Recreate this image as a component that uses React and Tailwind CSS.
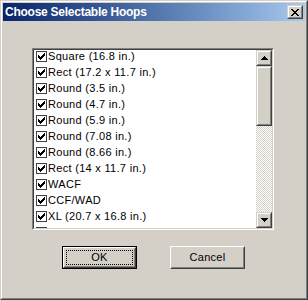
import React from "react";

const items = [
  "Square (16.8 in.)",
  "Rect (17.2 x 11.7 in.)",
  "Round (3.5 in.)",
  "Round (4.7 in.)",
  "Round (5.9 in.)",
  "Round (7.08 in.)",
  "Round (8.66 in.)",
  "Rect (14 x 11.7 in.)",
  "WACF",
  "CCF/WAD",
  "XL (20.7 x 16.8 in.)",
  "Tech 2 Hoop (9.4 x 8.3 in.)",
];

function Check() {
  return (
    <svg width="11" height="11" viewBox="0 0 11 11" className="shrink-0 mt-[1px] ml-[2px]" shapeRendering="crispEdges">
      <rect x="0" y="0" width="11" height="11" fill="#404040" />
      <rect x="1" y="1" width="9" height="9" fill="#ffffff" />
      <path d="M2 4h1v3h-1zM3 5h1v3h-1zM4 6h1v3h-1zM5 5h1v3h-1zM6 4h1v3h-1zM7 3h1v3h-1zM8 2h1v3h-1z" fill="#000" />
    </svg>
  );
}

function Raised({ className = "", children }) {
  return (
    <div className={"border border-t-[#d4d0c8] border-l-[#d4d0c8] border-r-[#404040] border-b-[#404040] " + className}>
      <div className="w-full h-full border border-t-white border-l-white border-r-[#808080] border-b-[#808080] bg-[#d4d0c8] flex items-center justify-center">
        {children}
      </div>
    </div>
  );
}

export default function App() {
  const font = { fontFamily: '"Liberation Sans", Arial, sans-serif' };
  return (
    <div style={font} className="w-[308px] h-[300px] border border-t-[#d4d0c8] border-l-[#d4d0c8] border-r-[#404040] border-b-[#404040] bg-[#d4d0c8]">
      <div className="w-full h-full border border-t-white border-l-white border-r-[#808080] border-b-[#808080] p-[1px] flex flex-col">
        <div className="h-[18px] shrink-0 flex items-center pl-[2px] pr-[2px] bg-gradient-to-r from-[#0a246a] to-[#a6caf0]">
          <span className="text-white font-bold text-[12px] tracking-[-0.25px] leading-none">Choose Selectable Hoops</span>
          <Raised className="ml-auto w-[16px] h-[14px]">
            <svg width="8" height="7" viewBox="0 0 8 7" shapeRendering="crispEdges">
              <path d="M0 0h2v1h-2zM6 0h2v1h-2zM1 1h2v1h-2zM5 1h2v1h-2zM2 2h4v1h-4zM3 3h2v1h-2zM2 4h4v1h-4zM1 5h2v1h-2zM5 5h2v1h-2zM0 6h2v1h-2zM6 6h2v1h-2z" fill="#000" />
            </svg>
          </Raised>
        </div>

        <div className="mt-[27px] ml-[29px] w-[242px] h-[182px] border border-t-[#808080] border-l-[#808080] border-r-white border-b-white">
          <div className="w-full h-full border border-t-[#404040] border-l-[#404040] border-r-[#d4d0c8] border-b-[#d4d0c8] flex">
            <div className="flex-1 bg-white overflow-hidden">
              {items.map((t) => (
                <div key={t} className="h-[16px] flex items-start">
                  <Check />
                  <span className="ml-[1px] text-[11px] leading-[13px] text-black tracking-[0.3px] whitespace-nowrap">{t}</span>
                </div>
              ))}
            </div>
            <div className="w-[16px] flex flex-col">
              <Raised className="w-[16px] h-[16px] shrink-0">
                <svg width="7" height="4" viewBox="0 0 7 4" shapeRendering="crispEdges">
                  <path d="M3 0h1v1h-1zM2 1h3v1h-3zM1 2h5v1h-5zM0 3h7v1h-7z" fill="#000" />
                </svg>
              </Raised>
              <Raised className="w-[16px] h-[60px] shrink-0" />
              <div className="flex-1 bg-[repeating-conic-gradient(#ffffff_0_25%,#d4d0c8_0_50%)] bg-[length:2px_2px]" />
              <Raised className="w-[16px] h-[16px] shrink-0">
                <svg width="7" height="4" viewBox="0 0 7 4" shapeRendering="crispEdges">
                  <path d="M0 0h7v1h-7zM1 1h5v1h-5zM2 2h3v1h-3zM3 3h1v1h-1z" fill="#000" />
                </svg>
              </Raised>
            </div>
          </div>
        </div>

        <div className="mt-[16px] flex">
          <div className="ml-[59px] w-[75px] h-[23px] border border-black">
            <div className="w-full h-full border border-t-white border-l-white border-r-[#404040] border-b-[#404040]">
              <div className="w-full h-full border border-t-[#d4d0c8] border-l-[#d4d0c8] border-r-[#808080] border-b-[#808080] p-[1px]">
                <div className="w-full h-full border border-dotted border-black flex items-center justify-center">
                  <span className="text-[11px] leading-none text-black tracking-[0.3px]">OK</span>
                </div>
              </div>
            </div>
          </div>
          <div className="ml-[33px] w-[75px] h-[23px] border border-t-white border-l-white border-r-[#404040] border-b-[#404040]">
            <div className="w-full h-full border border-t-[#d4d0c8] border-l-[#d4d0c8] border-r-[#808080] border-b-[#808080] flex items-center justify-center">
              <span className="text-[11px] leading-none text-black tracking-[0.3px]">Cancel</span>
            </div>
          </div>
        </div>
      </div>
    </div>
  );
}
